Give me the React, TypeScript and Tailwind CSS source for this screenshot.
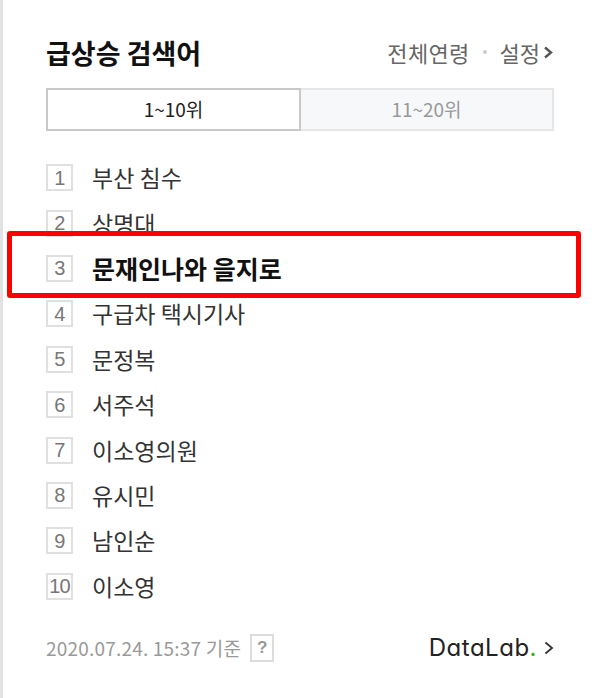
import React from "react";

const items = [
  "부산 침수",
  "상명대",
  "문재인나와 을지로",
  "구급차 택시기사",
  "문정복",
  "서주석",
  "이소영의원",
  "유시민",
  "남인순",
  "이소영",
];

export default function App() {
  return (
    <div className="relative w-[600px] h-[698px] bg-white border-l-[3px] border-[#e2e2e2] font-['Noto_Sans_CJK_KR','Noto_Sans',sans-serif] overflow-hidden">
      <div className="pl-[43px] pr-[45px]">
        {/* header */}
        <div className="flex items-center justify-between h-[52px] mt-[26px]">
          <div className="text-[27px] font-bold text-[#111] leading-none">급상승 검색어</div>
          <div className="flex items-center text-[22px] text-[#666] leading-none">
            <span className="tracking-[0.3px]">전체연령</span>
            <span className="mx-[13px] w-[4px] h-[4px] bg-[#ccc] rounded-full" />
            <span>설정</span>
            <svg width="13" height="15" viewBox="0 0 13 15" className="ml-[2px]">
              <path d="M3 2.5 L9 7.5 L3 12.5" fill="none" stroke="#555" strokeWidth="2.4" />
            </svg>
          </div>
        </div>
        {/* tabs */}
        <div className="flex mt-[10px] h-[43px] w-[508px]">
          <div className="flex-1 flex items-center justify-center border-2 border-[#c9c9c9] bg-white text-[19px] text-[#222]">
            1~10위
          </div>
          <div className="flex-1 flex items-center justify-center border-2 border-l-0 border-[#e6e6e6] bg-[#f7f8fa] text-[19px] text-[#999]">
            11~20위
          </div>
        </div>
        {/* list */}
        <ol className="mt-[24px]">
          {items.map((t, i) => (
            <li key={i} className="flex items-center h-[45.4px]">
              <span className="w-[27px] h-[27px] flex items-center justify-center border-2 border-[#e0e0e0] text-[20px] text-[#777] leading-none font-['Liberation_Sans',sans-serif] tracking-[-0.8px]">
                {i + 1}
              </span>
              <span
                className={
                  i === 2
                    ? "ml-[19px] text-[25px] font-bold text-[#111] leading-none"
                    : "ml-[19px] text-[23px] text-[#333] leading-none"
                }
              >
                {t}
              </span>
            </li>
          ))}
        </ol>
        {/* footer */}
        <div className="flex items-center justify-between mt-[24px] h-[30px]">
          <div className="flex items-center text-[19px] text-[#999] leading-none">
            <span className="tracking-[0.2px]">2020.07.24. 15:37 기준</span>
            <span className="ml-[9px] w-[24px] h-[28px] border-2 border-[#dcdcdc] flex items-center justify-center text-[17px] font-bold text-[#999] font-['Liberation_Sans',sans-serif]">
              ?
            </span>
          </div>
          <div className="flex items-center text-[24px] text-[#222] leading-none font-['Inter',sans-serif] [font-feature-settings:'cv11'] tracking-[0.5px]">
            <span>DataLab</span>
            <span className="text-[#2db400]">.</span>
            <svg width="12" height="16" viewBox="0 0 12 16" className="ml-[6px]">
              <path d="M2.5 2.5 L9 8 L2.5 13.5" fill="none" stroke="#333" strokeWidth="1.8" />
            </svg>
          </div>
        </div>
      </div>
      {/* red highlight */}
      <div className="absolute left-[4px] top-[231px] w-[574px] h-[67px] border-[5px] border-[#ff0000] rounded-[3px]" />
    </div>
  );
}
